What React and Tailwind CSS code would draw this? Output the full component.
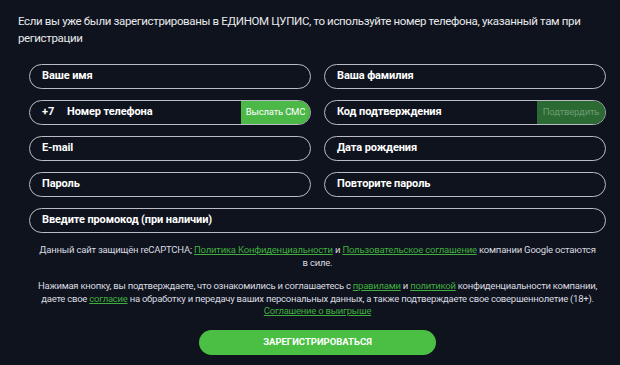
export default function App() {
  const font = { fontFamily: 'Roboto, "Open Sans", sans-serif' };

  const Field = ({ children, className = "" }) => (
    <div
      className={
        "h-[25px] rounded-full border border-[#b9bcc4] flex items-center overflow-hidden " +
        className
      }
    >
      {children}
    </div>
  );

  const Label = ({ children }) => (
    <span className="flex-1 pl-3 text-[11px] font-bold text-white tracking-[-0.1px]">
      {children}
    </span>
  );

  const Link = ({ children }) => (
    <a className="text-[#3fae3f] underline">{children}</a>
  );

  return (
    <div
      className="w-[620px] h-[365px] bg-[#0f131d] text-white overflow-hidden"
      style={font}
    >
      <p className="px-[18px] pt-[13px] text-[11.5px] leading-[17px] tracking-[-0.35px] text-[#e8e9ec]">
        Если вы уже были зарегистрированы в ЕДИНОМ ЦУПИС, то используйте номер
        телефона, указанный там при регистрации
      </p>

      <div className="mt-[17px] ml-[29px] mr-[14px] flex flex-col">
        <div className="grid grid-cols-2 gap-x-[13px] gap-y-[11px]">
          <Field>
            <Label>Ваше имя</Label>
          </Field>
          <Field>
            <Label>Ваша фамилия</Label>
          </Field>

          <Field>
            <span className="pl-3 w-[37px] text-[11px] font-bold text-white">+7</span>
            <span className="flex-1 text-[11px] font-bold text-white tracking-[-0.1px]">
              Номер телефона
            </span>
            <span className="h-full w-[69px] flex items-center justify-center bg-[#4cb848] text-[9.5px] tracking-[-0.2px] text-white">
              Выслать СМС
            </span>
          </Field>
          <Field>
            <Label>Код подтверждения</Label>
            <span className="h-full w-[68px] flex items-center justify-center bg-[#2c6a33] text-[9.5px] tracking-[-0.2px] text-[#6f9a72]">
              Подтвердить
            </span>
          </Field>

          <Field>
            <Label>E-mail</Label>
          </Field>
          <Field>
            <Label>Дата рождения</Label>
          </Field>

          <Field>
            <Label>Пароль</Label>
          </Field>
          <Field>
            <Label>Повторите пароль</Label>
          </Field>

          <Field className="col-span-2">
            <Label>Введите промокод (при наличии)</Label>
          </Field>
        </div>

        <p className="mt-[10px] text-center text-[9.5px] leading-[13px] tracking-[-0.2px] text-[#d9dbe0]">
          Данный сайт защищён reCAPTCHA; <Link>Политика Конфиденциальности</Link> и{" "}
          <Link>Пользовательское соглашение</Link> компании Google остаются
          <br />в силе.
        </p>

        <p className="mt-[11px] text-center text-[9.5px] leading-[12.5px] tracking-[-0.25px] text-[#d9dbe0]">
          Нажимая кнопку, вы подтверждаете, что ознакомились и соглашаетесь с{" "}
          <Link>правилами</Link> и <Link>политикой</Link> конфиденциальности
          компании,
          <br />
          даете свое <Link>согласие</Link> на обработку и передачу ваших
          персональных данных, а также подтверждаете свое совершеннолетие (18+).
          <br />
          <Link>Соглашение о выигрыше</Link>
        </p>

        <button className="mt-[12px] self-center w-[237px] h-[25px] rounded-full bg-[#4bbf44] text-[9.5px] font-bold text-white uppercase">
          Зарегистрироваться
        </button>
      </div>
    </div>
  );
}
